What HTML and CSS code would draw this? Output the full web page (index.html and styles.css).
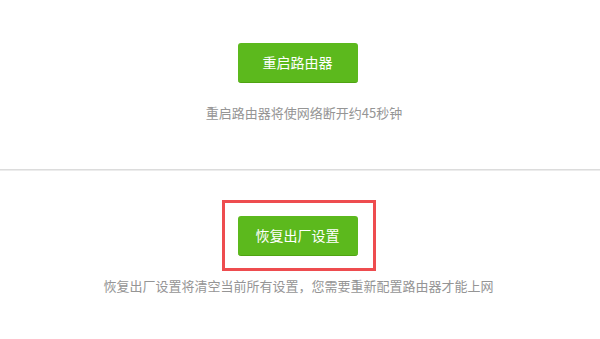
FILE: index.html
```html
<!DOCTYPE html>
<html lang="zh-CN">
<head>
<meta charset="utf-8">
<link rel="stylesheet" href="styles.css">
</head>
<body>
<div class="page">
  <section class="sec sec-top">
    <button class="btn">重启路由器</button>
    <p class="tip tip-top">重启路由器将使网络断开约45秒钟</p>
  </section>
  <div class="divider"></div>
  <section class="sec sec-bottom">
    <div class="highlight">
      <button class="btn">恢复出厂设置</button>
    </div>
    <p class="tip tip-bottom">恢复出厂设置将清空当前所有设置，您需要重新配置路由器才能上网</p>
  </section>
</div>
</body>
</html>
```
FILE: styles.css
```css
html, body {
  margin: 0;
  padding: 0;
  background: #ffffff;
}
body {
  font-family: "Noto Sans CJK SC", "Noto Sans", sans-serif;
  width: 600px;
  height: 339px;
  overflow: hidden;
}
.page {
  display: flex;
  flex-direction: column;
}
.sec {
  display: flex;
  flex-direction: column;
  align-items: center;
}
.sec-top {
  padding-top: 43px;
}
.btn {
  width: 120px;
  height: 40px;
  margin: 0;
  padding: 0;
  border: none;
  border-bottom: 1px solid #4fa312;
  border-radius: 3px;
  background: #5cb91d;
  color: #ffffff;
  font-family: "Noto Sans CJK SC", sans-serif;
  font-size: 14px;
  font-weight: 400;
  line-height: 39px;
  box-sizing: border-box;
  margin-left: -5px;
}
.tip {
  margin: 0;
  font-size: 13px;
  line-height: 20px;
  color: #959595;
}
.tip-top {
  margin-top: 20px;
  margin-left: 8px;
}
.divider {
  margin-top: 46px;
  height: 1px;
  background: #dcdcdc;
  border-bottom: 1px solid #ececec;
}
.sec-bottom {
  padding-top: 29px;
}
.highlight {
  width: 154px;
  height: 71px;
  box-sizing: border-box;
  border: 3px solid #ee4c4f;
  display: flex;
  align-items: flex-start;
  justify-content: center;
  padding-top: 13px;
  margin-left: -2px;
}
.highlight .btn {
  margin-left: -3px;
}
.tip-bottom {
  margin-top: 5px;
  margin-left: -3px;
}
```
